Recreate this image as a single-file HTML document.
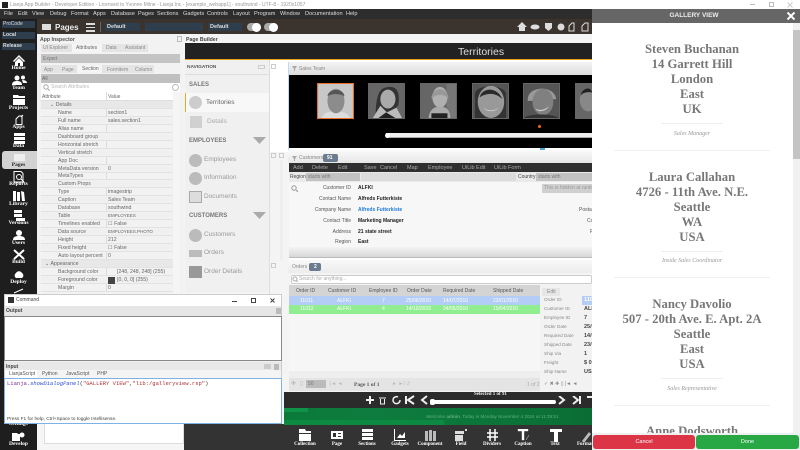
<!DOCTYPE html>
<html><head><meta charset="utf-8"><style>
html,body{margin:0;padding:0;width:800px;height:450px;overflow:hidden;background:#fff}
*{box-sizing:border-box}
body{font-family:"Liberation Sans",sans-serif;font-size:5px;color:#444;position:relative;filter:blur(.3px)}
.b{position:absolute}
.t{position:absolute;white-space:nowrap;line-height:8px}
.side{position:absolute;left:0;width:37px;text-align:center;color:#fff;font:bold 5.5px/7px "Liberation Serif",serif}
.row{position:absolute;left:41px;width:132px;height:8px;border-bottom:1px solid #e2e2e2;color:#666;font-size:5.2px;line-height:8px}
.row.a{background:#f0f0f0}
.row b{font-weight:normal;position:absolute;left:17px;white-space:nowrap}
.row i{font-style:normal;position:absolute;left:67px;white-space:nowrap}
.nav{position:absolute;left:204px;color:#777;font-size:6.5px;line-height:10px;white-space:nowrap}
.nh{position:absolute;left:189px;color:#777;font-weight:bold;font-size:6px;line-height:10px}
.ni{position:absolute;left:189px;width:13px;height:13px;border-radius:50%;background:#bbb}
.ph{position:absolute;top:83px;width:37px;height:36px;border:1px solid #666}
.m{position:absolute;top:9px;color:#ddd;font-size:5.6px;line-height:10px;white-space:nowrap}
.g{position:absolute;left:593px;width:198px;text-align:center;font:bold 12.7px/15px "Liberation Serif",serif;color:#777}
.s{position:absolute;left:593px;width:198px;text-align:center;font:italic 6px/8px "Liberation Serif",serif;color:#999}
.d1{position:absolute;left:661px;width:62px;height:1px;background:#eee}
.d2{position:absolute;left:614px;width:156px;height:1px;background:#f0f0f0}
.f{position:absolute;left:292px;width:59px;text-align:right;font-size:5px;line-height:8px;color:#555}
.v{position:absolute;left:358px;font-size:5px;font-weight:bold;line-height:8px;color:#222;white-space:nowrap}
.hc{position:absolute;top:287px;font-size:5px;line-height:8px;color:#555;white-space:nowrap}
.c{position:absolute;font-size:5px;line-height:8px;color:#fff;white-space:nowrap}
.e{position:absolute;left:544px;font-size:4.6px;line-height:8px;color:#888;white-space:nowrap}
.ev{position:absolute;left:584px;font-size:5.5px;font-weight:bold;line-height:8px;color:#444}
.tb{position:absolute;top:441px;color:#fff;font:bold 5px/7px "Liberation Serif",serif;text-align:center;width:40px}
.cb{position:absolute;top:164px;color:#aaa;font-size:5.5px;line-height:8px;white-space:nowrap}
</style></head><body>

<!-- title bar -->
<div class="b" style="left:0;top:0;width:592px;height:9px;background:#fff"></div>
<div class="b" style="left:2px;top:2px;width:6px;height:6px;background:#222"></div>
<div class="t" style="left:10px;top:1px;font-size:5px;color:#999">Lianja App Builder - Developer Edition - Licensed to Yvonne Milne - Lianja Inc - [example_webapp1] - southwind - UTF-8 - 1920x1057</div>

<!-- menu -->
<div class="b" style="left:0;top:9px;width:592px;height:10px;background:#2d2d2d"></div>
<span class="m" style="left:4px">File</span><span class="m" style="left:18px">Edit</span><span class="m" style="left:32px">View</span><span class="m" style="left:50px">Debug</span><span class="m" style="left:71px">Format</span><span class="m" style="left:93px">Apps</span><span class="m" style="left:111px">Database</span><span class="m" style="left:138px">Pages</span><span class="m" style="left:157px">Sections</span><span class="m" style="left:183px">Gadgets</span><span class="m" style="left:207px">Controls</span><span class="m" style="left:233px">Layout</span><span class="m" style="left:254px">Program</span><span class="m" style="left:280px">Window</span><span class="m" style="left:305px">Documentation</span><span class="m" style="left:346px">Help</span>

<!-- toolbar -->
<div class="b" style="left:37px;top:19px;width:555px;height:15px;background:#3a332e"></div>
<div class="b" style="left:0;top:19px;width:37px;height:431px;background:#1e1e1e"></div>
<div class="b" style="left:2px;top:21px;width:33px;height:7px;background:#2f3e4c"></div><span class="t" style="left:3px;top:20px;color:#ddd;font-size:5px">ProCode</span>
<div class="b" style="left:2px;top:32px;width:33px;height:7px;background:#2f3e4c"></div><span class="t" style="left:3px;top:31px;color:#ddd;font-size:5px;font-weight:bold">Local</span>
<div class="b" style="left:2px;top:43px;width:33px;height:7px;background:#2f3e4c"></div><span class="t" style="left:3px;top:42px;color:#ddd;font-size:5px;font-weight:bold">Release</span>
<div class="b" style="left:42px;top:24px;width:9px;height:6px;background:#ddd"></div>
<span class="t" style="left:55px;top:23px;color:#eee;font-size:8px;line-height:9px;font-weight:bold">Pages</span>
<div class="b" style="left:86px;top:23px;width:9px;height:1.5px;background:#ddd"></div><div class="b" style="left:86px;top:26.5px;width:9px;height:1.5px;background:#ddd"></div><div class="b" style="left:86px;top:30px;width:9px;height:1.5px;background:#ddd"></div>
<div class="b" style="left:100px;top:22px;width:1px;height:10px;background:#666"></div>
<div class="b" style="left:105px;top:23px;width:35px;height:8px;background:#2f3e4c"></div><span class="t" style="left:107px;top:23px;color:#ddd;font-weight:bold;font-size:5.5px">Default</span>
<div class="b" style="left:145px;top:23px;width:58px;height:8px;background:#2f3e4c"></div>
<div class="b" style="left:208px;top:23px;width:34px;height:8px;background:#2f3e4c"></div><span class="t" style="left:210px;top:23px;color:#ddd;font-weight:bold;font-size:5.5px">Default</span>
<div class="b" style="left:247px;top:23px;width:14px;height:8px;border-radius:4px;background:#aaa"></div><div class="b" style="left:252px;top:22.5px;width:9px;height:9px;border-radius:50%;background:#fff"></div>
<div class="b" style="left:264px;top:23px;width:14px;height:8px;border-radius:4px;background:#aaa"></div><div class="b" style="left:269px;top:22.5px;width:9px;height:9px;border-radius:50%;background:#fff"></div>
<svg class="b" style="left:516px;top:21px" width="76" height="12" fill="#ddd"><path d="M1 6 6 1l5 5H9v4H3V6z"/><ellipse cx="19" cy="6" rx="4.5" ry="2.5"/><path d="M29 2h7v5l-3.500 3-3.500-3z"/><circle cx="45" cy="6" r="3.500"/><path d="M53 5l3-3h2v8h-5z" fill="none" stroke="#ddd"/><path d="M66 5l3-3h3v8h-6z" fill="none" stroke="#ddd"/></svg>

<!-- sidebar -->
<svg class="b" style="left:13px;top:55px" width="12" height="11" fill="#fff"><path d="M0 6 6 0l6 6-1 1-5-5-5 5z"/><path d="M2 7 6 3l4 4v4H7V8H5v3H2z"/></svg>
<div class="side" style="top:65px">Home</div>
<svg class="b" style="left:12px;top:75px" width="15" height="10" fill="#fff"><circle cx="5" cy="3" r="2.500"/><circle cx="11" cy="2.500" r="2"/><path d="M0 10c0-3 2-4 5-4s5 1 5 4z"/><path d="M10 5c3 0 5 1 5 3h-4z"/></svg>
<div class="side" style="top:85px">Team</div>
<svg class="b" style="left:13px;top:95px" width="12" height="10" fill="#fff"><path d="M0 0h5l1 1h6v2H0z"/><path d="M0 4h12v6H0z"/></svg>
<div class="side" style="top:105px">Projects</div>
<svg class="b" style="left:15px;top:114px" width="9" height="11" fill="none" stroke="#fff"><path d="M1 5l3-3h3v8.500H1z"/><path d="M6 3l2-2"/></svg>
<div class="side" style="top:124px">Apps</div>
<svg class="b" style="left:14px;top:133px" width="11" height="11" fill="#fff"><path d="M0 0h11v3H0zM0 4h11v3H0zM0 8h11v3H0z"/></svg>
<div class="side" style="top:143px">Data</div>
<div class="b" style="left:2px;top:151px;width:35px;height:18px;background:#d2d2d2;border-radius:3px 0 0 3px"></div>
<div class="b" style="left:14px;top:154px;width:11px;height:7px;background:#eee"></div>
<div class="side" style="top:162px;color:#222">Pages</div>
<svg class="b" style="left:13px;top:171px" width="12" height="12" fill="none" stroke="#fff"><path d="M1 .5h7l2 2V11H1z"/><circle cx="6" cy="6" r="2.500"/><path d="M8 8l3 3"/></svg>
<div class="side" style="top:181px">Reports</div>
<svg class="b" style="left:13px;top:191px" width="12" height="10" fill="#fff"><path d="M0 0h3v10H0zM4 1h3v9H4zM8 0l3 1 1 9h-3z"/></svg>
<div class="side" style="top:201px">Library</div>
<svg class="b" style="left:13px;top:210px" width="12" height="11" fill="#fff"><path d="M1 0h8v3H1zM1 4h8v3H1zM3 8h9v3H3z"/></svg>
<div class="side" style="top:220px">Versions</div>
<svg class="b" style="left:13px;top:230px" width="12" height="10" fill="#fff"><circle cx="6" cy="3" r="3"/><path d="M0 10c0-3 2-4 6-4s6 1 6 4z"/></svg>
<div class="side" style="top:240px">Users</div>
<svg class="b" style="left:13px;top:249px" width="12" height="11" stroke="#fff" stroke-width="2" fill="none"><path d="M1 1l10 9M11 1 1 10"/></svg>
<div class="side" style="top:259px">Build</div>
<svg class="b" style="left:13px;top:269px" width="12" height="9" fill="#fff"><path d="M3 9a3 3 0 0 1 0-5 3.500 3.500 0 0 1 6 0 3 3 0 0 1 0 5z"/></svg>
<div class="side" style="top:279px">Deploy</div>
<svg class="b" style="left:13px;top:288px" width="12" height="6" stroke="#fff" fill="none"><path d="M1 5l9-4"/></svg>
<div class="side" style="top:421px">Settings</div>
<svg class="b" style="left:12px;top:432px" width="13" height="9" fill="#fff"><path d="M0 1h5l1 1h2v7H0z"/><circle cx="10" cy="3" r="2.500"/></svg>
<div class="side" style="top:441px">Develop</div>

<!-- App inspector -->
<div class="b" style="left:37px;top:34px;width:146px;height:416px;background:#f2f2f2"></div>
<span class="t" style="left:40px;top:36px;font-weight:bold;font-size:5.2px;color:#555">App Inspector</span>
<div class="b" style="left:177px;top:36px;width:5px;height:6px;border:1px solid #bbb"></div>
<div class="b" style="left:41px;top:44px;width:107px;height:8px;background:#e4e4e4"></div>
<div class="b" style="left:72px;top:44px;width:30px;height:8px;background:#f5f5f5"></div>
<span class="t" style="left:43px;top:44px;color:#888">UI Explorer</span><span class="t" style="left:76px;top:44px;color:#666">Attributes</span><span class="t" style="left:106px;top:44px;color:#888">Data</span><span class="t" style="left:125px;top:44px;color:#888">Assistant</span>
<div class="b" style="left:41px;top:54px;width:139px;height:9px;background:#c4c4c4"></div><span class="t" style="left:43px;top:55px;color:#777">Expert</span>
<div class="b" style="left:41px;top:65px;width:113px;height:8px;background:#e4e4e4"></div>
<div class="b" style="left:77px;top:65px;width:25px;height:8px;background:#f5f5f5"></div>
<span class="t" style="left:44px;top:66px;color:#888">App</span><span class="t" style="left:62px;top:66px;color:#888">Page</span><span class="t" style="left:82px;top:65px;color:#666">Section</span><span class="t" style="left:107px;top:66px;color:#888">Formitem</span><span class="t" style="left:135px;top:66px;color:#888">Column</span>
<div class="b" style="left:41px;top:74px;width:139px;height:9px;background:#c0c0c0"></div><span class="t" style="left:42px;top:75px;color:#666">All</span>
<div class="b" style="left:41px;top:83px;width:139px;height:9px;background:#fff"></div>
<svg class="b" style="left:43px;top:84px" width="7" height="7" fill="none" stroke="#aaa"><circle cx="3" cy="3" r="2.200"/><path d="M5 5l2 2"/></svg>
<span class="t" style="left:51px;top:83px;color:#bbb">Search Attributes</span>
<div class="b" style="left:172px;top:84px;width:7px;height:7px;border-radius:50%;border:1px solid #bbb"></div>
<div class="b" style="left:41px;top:92px;width:132px;height:9px;background:#fff;border-bottom:1px solid #ddd"></div>
<span class="t" style="left:42px;top:93px;color:#666">Attribute</span><span class="t" style="left:108px;top:93px;color:#666">Value</span>
<div class="b" style="left:106px;top:92px;width:1px;height:200px;background:#dcdcdc"></div>
<div class="b" style="left:173px;top:92px;width:7px;height:205px;background:#f5f5f5"></div>
<div class="row" style="top:101px;background:#e8e8e8"><b style="left:9px">⌄ Details</b></div>
<div class="row" style="top:109px"><b>Name</b><i>section1</i></div>
<div class="row a" style="top:117px"><b>Full name</b><i>sales.section1</i></div>
<div class="row" style="top:125px"><b>Alias name</b></div>
<div class="row a" style="top:133px"><b>Dashboard group</b></div>
<div class="row" style="top:141px"><b>Horizontal stretch</b></div>
<div class="row a" style="top:149px"><b>Vertical stretch</b></div>
<div class="row" style="top:157px"><b>App Doc</b></div>
<div class="row a" style="top:165px"><b>MetaData version</b><i>0</i></div>
<div class="row" style="top:172px"><b>MetaTypes</b></div>
<div class="row a" style="top:180px"><b>Custom Props</b></div>
<div class="row" style="top:188px"><b>Type</b><i>imagestrip</i></div>
<div class="row a" style="top:196px"><b>Caption</b><i>Sales Team</i></div>
<div class="row" style="top:204px"><b>Database</b><i>southwind</i></div>
<div class="row a" style="top:212px"><b>Table</b><i style="font-size:4.500px">EMPLOYEES</i></div>
<div class="row" style="top:220px"><b>Timelines enabled</b><i>☐ False</i></div>
<div class="row a" style="top:228px"><b>Data source</b><i style="font-size:4.500px">EMPLOYEES.PHOTO</i></div>
<div class="row" style="top:236px"><b>Height</b><i>212</i></div>
<div class="row a" style="top:244px"><b>Fixed height</b><i>☐ False</i></div>
<div class="row" style="top:252px"><b>Auto layout percent</b><i>0</i></div>
<div class="row" style="top:260px;background:#e8e8e8"><b style="left:4px">⌄ Appearance</b></div>
<div class="row" style="top:268px"><b>Background color</b><i style="left:76px">[248, 248, 248] (255)</i></div>
<div class="row a" style="top:276px"><b>Foreground color</b><i style="left:76px">[0, 0, 0] (255)</i></div>
<div class="b" style="left:108px;top:277px;width:7px;height:7px;background:#444"></div>
<div class="row" style="top:284px"><b>Margin</b><i>0</i></div>

<!-- page builder -->
<div class="b" style="left:183px;top:34px;width:409px;height:416px;background:#f4f4f4"></div>
<span class="t" style="left:186px;top:36px;font-weight:bold;font-size:5.2px;color:#444">Page Builder</span>
<div class="b" style="left:185px;top:43px;width:407px;height:16px;background:#222"></div>
<span class="t" style="left:458px;top:46px;color:#ddd;font-size:10.500px;line-height:12px">Territories</span>
<div class="b" style="left:185px;top:59px;width:407px;height:1px;background:#e8a317"></div>
<div class="b" style="left:185px;top:60px;width:84px;height:232px;background:#f0f0f0"></div>
<div class="b" style="left:269px;top:60px;width:323px;height:2px;background:#fff"></div>
<div class="b" style="left:269px;top:62px;width:323px;height:90px;background:#fff"></div>
<div class="b" style="left:288px;top:61.500px;width:304px;height:1px;background:#b8dcf5"></div>
<div class="b" style="left:288px;top:62px;width:1px;height:88px;background:#b8dcf5"></div>
<span class="t" style="left:187px;top:64px;font-weight:bold;font-size:4.800px;color:#555">NAVIGATION</span>
<div class="b" style="left:258px;top:65px;width:7px;height:4px;border:1px solid #ccc"></div>
<div class="b" style="left:185px;top:74px;width:84px;height:1px;background:#ddd"></div>
<div class="nh" style="top:80px">SALES</div>
<div class="b" style="left:185px;top:93px;width:84px;height:19px;background:#f8f8f8;border-left:1px solid #f0a91e"></div>
<div class="ni" style="top:96px;background:#ccc"></div><div class="nav" style="left:206px;top:98px;color:#666">Territories</div>
<div class="b" style="left:190px;top:116px;width:12px;height:12px;background:#d0d0d0"></div><div class="nav" style="left:207px;top:117px;color:#aaa">Details</div>
<div class="nh" style="top:136px">EMPLOYEES</div>
<svg class="b" style="left:253px;top:137px" width="13" height="7" fill="#aaa"><path d="M0 0h13l-6.500 7z"/></svg>
<div class="ni" style="top:154px"></div><div class="nav" style="top:155px;color:#999">Employees</div>
<div class="ni" style="top:172px"></div><div class="nav" style="top:173px;color:#999">Information</div>
<div class="b" style="left:189px;top:191px;width:13px;height:12px;background:#ddd;border:1px solid #aaa"></div><div class="nav" style="top:192px;color:#999">Documents</div>
<div class="nh" style="top:211px">CUSTOMERS</div>
<svg class="b" style="left:253px;top:212px" width="13" height="7" fill="#aaa"><path d="M0 0h13l-6.500 7z"/></svg>
<div class="ni" style="top:229px"></div><div class="nav" style="top:230px;color:#999">Customers</div>
<div class="b" style="left:189px;top:250px;width:13px;height:7px;background:#bbb"></div><div class="nav" style="top:248px;color:#999">Orders</div>
<div class="b" style="left:189px;top:266px;width:13px;height:12px;background:#999"></div><div class="nav" style="top:267px;color:#999">Order Details</div>
<div class="b" style="left:269px;top:60px;width:1px;height:235px;background:#ddd"></div>
<div class="b" style="left:271px;top:64px;width:5px;height:5px;border:1px solid #ccc"></div>
<div class="b" style="left:271px;top:153px;width:5px;height:5px;border:1px solid #ccc"></div>
<div class="b" style="left:279px;top:153px;width:5px;height:5px;border:1px solid #ccc"></div>
<div class="b" style="left:280px;top:160px;width:3px;height:100px;background:#eee"></div>
<div class="b" style="left:271px;top:263px;width:5px;height:5px;border:1px solid #ccc"></div>

<!-- Sales team -->
<div class="b" style="left:289px;top:62px;width:303px;height:13px;background:linear-gradient(#f4f4f4,#dcdcdc)"></div>
<span class="t" style="left:299px;top:65px;color:#888;font-size:5px">Sales Team</span>
<svg class="b" style="left:292px;top:66px" width="5" height="5" fill="#aaa"><path d="M0 0h5L3 3v2H2V3z"/></svg>
<div class="b" style="left:289px;top:75px;width:303px;height:73px;background:#000"></div>
<div class="b" style="left:386px;top:133px;width:206px;height:5px;background:#eee;border-bottom:1px solid #aaa"></div>
<div class="b" style="left:540px;top:148px;width:5px;height:2px;background:#4aa8d8"></div>
<div class="b" style="left:385px;top:133px;width:5px;height:5px;border-radius:50%;background:#fff"></div>
<div class="b" style="left:538px;top:125px;width:3px;height:3px;border-radius:50%;background:#f26522"></div>

<svg class="ph" style="left:317px;border-color:#e8702a" viewBox="0 0 37 36"><rect width="37" height="36" fill="#c8c8c8"/><path d="M4 36c2-6 8-7 15-7s13 2 15 7z" fill="#ddd"/><ellipse cx="19" cy="18" rx="9" ry="13" fill="#8c8c8c"/><path d="M10 13c1-9 17-9 18 0-4-3-14-3-18 0z" fill="#555"/></svg>
<svg class="ph" style="left:368px" viewBox="0 0 37 36"><rect width="37" height="36" fill="#666"/><path d="M7 36c0-25 4-33 15-33s10 12 9 20c-4 0-2 13 6 13z" fill="#333"/><ellipse cx="20" cy="16" rx="8" ry="10" fill="#aaa"/><path d="M4 36l8-13 7 7 10-5 6 11z" fill="#bbb"/><path d="M10 36l8-6 10 6z" fill="#222"/></svg>
<svg class="ph" style="left:420px" viewBox="0 0 37 36"><rect width="37" height="36" fill="#666"/><rect x="27" width="10" height="36" fill="#777"/><ellipse cx="20" cy="14" rx="8" ry="11" fill="#b0b0b0"/><path d="M11 16c0-14 18-14 18 0-3-6-15-6-18 0z" fill="#999"/><path d="M8 36c1-9 6-12 12-12s11 3 11 12z" fill="#aaa"/><rect x="11" y="31" width="17" height="5" fill="#222"/></svg>
<svg class="ph" style="left:472px" viewBox="0 0 37 36"><rect width="37" height="36" fill="#555"/><path d="M2 36V10C4 0 32 0 35 10v26z" fill="#333"/><ellipse cx="19" cy="19" rx="14" ry="17" fill="#999"/><path d="M7 14C10 3 26 3 31 16 24 9 15 9 7 14z" fill="#2a2a2a"/><path d="M11 25c4 4 12 4 16 0-3 5-13 5-16 0z" fill="#ddd"/></svg>
<svg class="ph" style="left:523px" viewBox="0 0 37 36"><rect width="37" height="36" fill="#555"/><path d="M4 18C2 2 32 0 34 16z" fill="#999"/><ellipse cx="20" cy="19" rx="11" ry="14" fill="#808080"/><path d="M12 26c4 3 12 1 14-3-1 6-12 8-14 3z" fill="#ccc"/><path d="M0 36c4-5 30-5 37 0z" fill="#333"/></svg>
<svg class="ph" style="left:575px;width:17px;border-right:0" viewBox="0 0 17 36" preserveAspectRatio="none"><rect width="17" height="36" fill="#666"/><ellipse cx="13" cy="17" rx="9" ry="12" fill="#888"/><path d="M5 12C7 3 17 3 17 9 12 8 8 9 5 12z" fill="#222"/></svg>

<!-- Customers -->
<div class="b" style="left:288px;top:150px;width:304px;height:13px;background:linear-gradient(#fafafa,#e6e6e6)"></div>
<svg class="b" style="left:292px;top:156px" width="5" height="5" fill="#aaa"><path d="M0 0h5L3 3v2H2V3z"/></svg>
<span class="t" style="left:299px;top:154px;color:#888">Customers</span>
<div class="b" style="left:323px;top:154px;width:15px;height:8px;background:#6b7c8f;border-radius:2px"></div><span class="t" style="left:327px;top:154px;color:#fff;font-weight:bold;font-size:5px">91</span>
<div class="b" style="left:289px;top:163px;width:303px;height:9px;background:#2f2f2f"></div>
<span class="cb" style="left:293px">Add</span><span class="cb" style="left:312px">Delete</span><span class="cb" style="left:338px">Edit</span><span class="cb" style="left:364px">Save</span><span class="cb" style="left:380px">Cancel</span><span class="cb" style="left:407px">Map</span><span class="cb" style="left:428px">Employee</span><span class="cb" style="left:462px">UiLib Edit</span><span class="cb" style="left:494px">UiLib Form</span>
<div class="b" style="left:289px;top:172px;width:303px;height:10px;background:#eaeaea"></div>
<span class="t" style="left:290px;top:173px;font-size:5px;color:#444">Region</span>
<div class="b" style="left:306px;top:173px;width:54px;height:8px;background:#c2c2c2"></div><span class="t" style="left:308px;top:173px;font-size:5px;color:#777">starts with</span>
<div class="b" style="left:361px;top:173px;width:155px;height:8px;background:#dcdcdc"></div>
<span class="t" style="left:518px;top:173px;font-size:5px;color:#444">Country</span>
<div class="b" style="left:536px;top:173px;width:56px;height:8px;background:#c2c2c2"></div><span class="t" style="left:538px;top:173px;font-size:5px;color:#777">starts with</span>
<div class="b" style="left:289px;top:182px;width:303px;height:65px;background:#f7f7f7"></div>
<div class="b" style="left:289px;top:247px;width:303px;height:10px;background:linear-gradient(#f4f4f4,#d8d8d8)"></div>
<div class="b" style="left:289px;top:257px;width:303px;height:1px;background:#bbb"></div>
<div class="b" style="left:289px;top:258px;width:303px;height:6px;background:#fff"></div>
<div class="b" style="left:542px;top:184px;width:50px;height:9px;background:#d0d0d0"></div><span class="t" style="left:544px;top:184px;font-size:5px;color:#999">This is hidden at runtime</span>
<svg class="b" style="left:291px;top:185px" width="7" height="7" fill="none" stroke="#999"><circle cx="3" cy="3" r="2.200"/><path d="M5 5l2 2"/></svg>
<div class="f" style="top:184px">Customer ID</div><div class="v" style="top:184px">ALFKI</div>
<div class="f" style="top:195px">Contact Name</div><div class="v" style="top:195px">Alfreds Futterkiste</div>
<div class="f" style="top:206px">Company Name</div><div class="v" style="top:206px;color:#1e7ad8">Alfreds Futterkiste</div>
<div class="f" style="top:217px">Contact Title</div><div class="v" style="top:217px">Marketing Manager</div>
<div class="f" style="top:228px">Address</div><div class="v" style="top:228px">21 state street</div>
<div class="f" style="top:238px">Region</div><div class="v" style="top:238px">East</div>
<span class="t" style="left:579px;top:206px;font-size:5px;color:#555">Postal</span><span class="t" style="left:587px;top:217px;font-size:5px;color:#555">Co</span><span class="t" style="left:590px;top:228px;font-size:5px;color:#555">P</span>

<!-- Orders -->
<div class="b" style="left:288px;top:260px;width:304px;height:13px;background:linear-gradient(#f8f8f8,#ececec)"></div>
<span class="t" style="left:292px;top:263px;color:#888;font-size:5px">Orders</span>
<div class="b" style="left:309px;top:263px;width:12px;height:8px;background:#6b7c8f;border-radius:2px"></div><span class="t" style="left:314px;top:263px;color:#fff;font-weight:bold;font-size:5px">2</span>
<div class="b" style="left:291px;top:275px;width:301px;height:9px;background:#fff;border:1px solid #ccc;border-radius:2px"></div>
<svg class="b" style="left:292px;top:276px" width="6" height="6" fill="none" stroke="#aaa"><circle cx="3" cy="3" r="2"/><path d="M4.500 4.500 6 6"/></svg>
<span class="t" style="left:299px;top:275px;color:#aaa;font-size:5px">Search for anything...</span>
<div class="b" style="left:289px;top:285px;width:251px;height:11px;background:#d4d4d4"></div>
<span class="hc" style="left:296px">Order ID</span><span class="hc" style="left:328px">Customer ID</span><span class="hc" style="left:369px">Employee ID</span><span class="hc" style="left:407px">Order Date</span><span class="hc" style="left:443px">Required Date</span><span class="hc" style="left:493px">Shipped Date</span>
<div class="b" style="left:289px;top:296px;width:253px;height:9px;background:#b3cdf6"></div>
<div class="b" style="left:289px;top:305px;width:253px;height:9px;background:#90ee90"></div>
<span class="c" style="left:300px;top:297px">11011</span><span class="c" style="left:337px;top:297px">ALFKI</span><span class="c" style="left:382px;top:297px">7</span><span class="c" style="left:406px;top:297px">25/06/2010</span><span class="c" style="left:443px;top:297px">14/07/2010</span><span class="c" style="left:493px;top:297px">23/01/2010</span>
<span class="c" style="left:300px;top:305px">11012</span><span class="c" style="left:337px;top:305px">ALFKI</span><span class="c" style="left:382px;top:305px">4</span><span class="c" style="left:406px;top:305px">14/10/2015</span><span class="c" style="left:443px;top:305px">24/05/2010</span><span class="c" style="left:493px;top:305px">15/04/2010</span>
<div class="b" style="left:289px;top:314px;width:253px;height:62px;background:#f6f6f6"></div>
<div class="b" style="left:289px;top:371px;width:251px;height:7px;background:#eee"></div>
<div class="b" style="left:289px;top:378px;width:251px;height:13px;background:#e4e4e4"></div>
<div class="b" style="left:306px;top:380px;width:20px;height:8px;background:#bbb"></div><span class="t" style="left:308px;top:380px;font-size:5px;color:#777">50</span>
<span class="t" style="left:291px;top:380px;color:#bbb;font-size:6px">✚</span><span class="t" style="left:300px;top:380px;color:#bbb;font-size:6px">▯</span>
<span class="t" style="left:330px;top:380px;color:#bbb;font-size:5px">|◄ ◄</span>
<span class="t" style="left:354px;top:381px;font:bold 5.500px/8px 'Liberation Serif',serif;color:#555">Page 1 of 1</span>
<span class="t" style="left:392px;top:380px;color:#bbb;font-size:5px">► ►| ↺</span>
<span class="t" style="left:527px;top:381px;color:#aaa;font-size:5px">1 of 22</span>
<div class="b" style="left:540px;top:285px;width:52px;height:106px;background:#f2f2f2"></div>
<div class="b" style="left:542px;top:288px;width:18px;height:8px;background:#e6e6e6"></div><span class="t" style="left:547px;top:288px;font-size:5px;color:#888">Edit</span>
<div class="b" style="left:582px;top:296px;width:10px;height:9px;background:#b3cdf6"></div>
<span class="e" style="top:296px">Order ID</span><span class="ev" style="top:296px;color:#fff">110</span>
<span class="e" style="top:305px">Customer ID</span><span class="ev" style="top:305px">ALF</span>
<span class="e" style="top:314px">Employee ID</span><span class="ev" style="top:314px">7</span>
<span class="e" style="top:323px">Order Date</span><span class="ev" style="top:323px">25/0</span>
<span class="e" style="top:332px">Required Date</span><span class="ev" style="top:332px">14/0</span>
<span class="e" style="top:341px">Shipped Date</span><span class="ev" style="top:341px">23/0</span>
<span class="e" style="top:350px">Ship Via</span><span class="ev" style="top:350px">1</span>
<span class="e" style="top:359px">Freight</span><span class="ev" style="top:359px">$ 0</span>
<span class="e" style="top:368px">Ship Name</span><span class="ev" style="top:368px">USA</span>
<span class="t" style="left:544px;top:380px;font-size:5px;color:#888">✓ ✖ ✚ ▯ |◄ ◄</span>

<!-- bottom bars -->
<div class="b" style="left:284px;top:392px;width:308px;height:16px;background:#2b2b2b"></div>
<svg class="b" style="left:365px;top:394px" width="66" height="12" fill="none" stroke="#eee" stroke-width="2"><path d="M1 6h8M5 2v8"/><path d="M14 4h7M15.500 5v5h4V5" stroke-width="1"/><path d="M33 3a3.500 3.500 0 1 0 2 3" stroke-width="1.500"/><path d="M41 2v8M49 2l-6 4 6 4"/><path d="M62 2l-5 4 5 4"/></svg>
<div class="b" style="left:432px;top:400px;width:124px;height:4px;border-radius:2px;background:#fff"></div>
<div class="b" style="left:430px;top:399px;width:5px;height:6px;border-radius:2px;background:#fff"></div>
<span class="t" style="left:474px;top:391px;color:#eee;font:bold 5px/7px 'Liberation Serif',serif">Selected 1 of 91</span>
<svg class="b" style="left:556px;top:396px" width="36" height="12" fill="none" stroke="#eee" stroke-width="2"><path d="M3 0l5 4-5 4M17 0l5 4-5 4M24 0v8M31 1h5"/></svg>
<div class="b" style="left:284px;top:408px;width:308px;height:17px;background:linear-gradient(90deg,#0a7a3a,#0e7c3e 30%,#0a6e34)"></div>
<div class="b" style="left:284px;top:408px;width:24px;height:4px;background:#0f9348"></div>
<div class="b" style="left:284px;top:420px;width:160px;height:5px;background:#0c8a42"></div>
<span class="t" style="left:426px;top:413px;color:#5fae80;font-size:4.600px">Welcome <b>admin</b>. Today is Monday November 4 2024 at 11:39:51</span>
<div class="b" style="left:284px;top:425px;width:308px;height:25px;background:#333"></div>
<div class="b" style="left:37px;top:424px;width:147px;height:26px;background:#f6f6f6"></div>
<div class="b" style="left:44px;top:424px;width:140px;height:20px;border:1px solid #ddd;border-top:0;background:#fff"></div>
<div class="b" style="left:184px;top:424px;width:100px;height:26px;background:#333"></div>
<svg class="b" style="left:284px;top:429px" width="308" height="13" fill="#fff">
<path d="M15 0h6l1 2h5v2H15zM15 5h12v7H15z"/>
<path d="M47 2h12v8H47z"/><path d="M49 4h3v4h-3zM54 4h3v1h-3zM54 7h3v1h-3z" fill="#333"/>
<path d="M78 0h11v3H78zM78 4h11v3H78zM78 8h11v3H78z"/>
<path d="M110 0h1v11h11v1h-12zM113 9l3-4 2 2 3-4v6z"/>
<path d="M141 2h3v10h-3zM145 1h3v11h-3zM149 2h3v10h-3z" fill="#bbb"/>
<path d="M171 2h9v3h-9zM171 6h8v6h-8zM181 0h2v2h-2z" fill="#ddd"/>
<path d="M206 0v12M211 0v12M203 4h11M203 8h11" stroke="#fff" stroke-width="1.500" fill="none"/>
<path d="M234 0h10v2h-4v9h-2V2h-4zM242 11l3-5" stroke="#fff" stroke-width=".4"/>
<path d="M266 0h12v3h-4v10h-4V3h-4z"/>
<path d="M298 12l7-9 2 2-7 9z" fill="#bbb"/>
</svg>
<div class="tb" style="left:285px">Collection</div><div class="tb" style="left:317px">Page</div><div class="tb" style="left:347px">Sections</div><div class="tb" style="left:380px">Gadgets</div><div class="tb" style="left:410px">Component</div><div class="tb" style="left:441px">Field</div><div class="tb" style="left:472px">Dividers</div><div class="tb" style="left:503px">Caption</div><div class="tb" style="left:535px">Text</div><div class="tb" style="left:565px">Format</div>

<!-- Command window -->
<div class="b" style="left:4px;top:294px;width:278px;height:130px;background:#f0f0f0;border:1px solid #ccc"></div>
<div class="b" style="left:5px;top:295px;width:276px;height:11px;background:#fff"></div>
<div class="b" style="left:8px;top:297px;width:6px;height:6px;background:#333"></div>
<span class="t" style="left:16px;top:296px;font-size:5px;color:#444">Command</span>
<div class="b" style="left:232px;top:301px;width:5px;height:1px;background:#444"></div>
<div class="b" style="left:251px;top:298px;width:5px;height:5px;border:1px solid #444"></div>
<svg class="b" style="left:270px;top:298px" width="6" height="6" stroke="#444" fill="none"><path d="M.5.500l4 4M4.500.500l-4 4"/></svg>
<div class="b" style="left:5px;top:306px;width:276px;height:10px;background:#e6e6e6"></div>
<span class="t" style="left:6px;top:307px;font-weight:bold;font-size:5px;color:#444">Output</span>
<div class="b" style="left:276px;top:308px;width:5px;height:6px;background:#bbb"></div>
<div class="b" style="left:4px;top:316px;width:278px;height:45px;background:#fff;border:1px solid #888"></div>
<div class="b" style="left:5px;top:362px;width:276px;height:9px;background:#e8e8e8"></div>
<span class="t" style="left:6px;top:363px;font-weight:bold;font-size:5px;color:#444">Input</span>
<div class="b" style="left:264px;top:364px;width:7px;height:5px;background:#ccc"></div><div class="b" style="left:274px;top:364px;width:5px;height:6px;background:#bbb"></div>
<div class="b" style="left:5px;top:370px;width:276px;height:8px;background:#f4f4f4"></div>
<div class="b" style="left:5px;top:370px;width:32px;height:8px;background:#fff"></div>
<span class="t" style="left:9px;top:370px;font-size:5px;color:#555">LianjaScript</span><span class="t" style="left:42px;top:370px;font-size:5px;color:#555">Python</span><span class="t" style="left:66px;top:370px;font-size:5px;color:#555">JavaScript</span><span class="t" style="left:97px;top:370px;font-size:5px;color:#555">PHP</span>
<div class="b" style="left:4px;top:378px;width:278px;height:46px;background:#fff;border:1px solid #7fb2e0"></div>
<span class="t" style="left:7px;top:380px;font:5.500px/8px 'Liberation Mono',monospace;color:#333"><span style="color:#7a2b96">Lianja</span>.<span style="color:#2b4fd8;font-style:italic">showDialogPanel</span>(<span style="color:#b03030">"GALLERY VIEW"</span>,<span style="color:#b03030">"lib:/galleryview.rsp"</span>)</span>
<span class="t" style="left:7px;top:416px;font-size:4.800px;color:#444">Press F1 for help, Ctrl+Space to toggle Intellisense.</span>

<!-- Gallery dialog -->
<div class="b" style="left:592px;top:0;width:208px;height:450px;background:#fff"></div>
<div class="b" style="left:750px;top:4px;width:5px;height:1px;background:#bbb"></div>
<div class="b" style="left:769px;top:2px;width:5px;height:5px;border:1px solid #bbb"></div>
<svg class="b" style="left:787px;top:2px" width="6" height="6" stroke="#ccc" fill="none"><path d="M.5.500l5 5M5.500.500l-5 5"/></svg>
<div class="b" style="left:592px;top:9px;width:208px;height:14px;background:#666"></div>
<span class="t" style="left:591px;width:206px;text-align:center;top:12px;color:#eee;font-weight:bold;font-size:6.500px">GALLERY VIEW</span>
<svg class="b" style="left:787px;top:12px" width="8" height="8" stroke="#fff" stroke-width="2" fill="none"><path d="M.5.500l7 7M7.500.500l-7 7"/></svg>
<div class="b" style="left:793px;top:23px;width:7px;height:410px;background:#f1f1f1"></div>
<div class="b" style="left:793px;top:30px;width:7px;height:129px;background:#c4c4c4"></div>

<div class="g" style="top:42px">Steven Buchanan</div><div class="g" style="top:57px">14 Garrett Hill</div><div class="g" style="top:72px">London</div><div class="g" style="top:87px">East</div><div class="g" style="top:102px">UK</div>
<div class="d1" style="top:123px"></div><div class="s" style="top:130px">Sales Manager</div><div class="d2" style="top:150px"></div>
<div class="g" style="top:170px">Laura Callahan</div><div class="g" style="top:185px">4726 - 11th Ave. N.E.</div><div class="g" style="top:200px">Seattle</div><div class="g" style="top:215px">WA</div><div class="g" style="top:230px">USA</div>
<div class="d1" style="top:251px"></div><div class="s" style="top:257px">Inside Sales Coordinator</div><div class="d2" style="top:277px"></div>
<div class="g" style="top:297px">Nancy Davolio</div><div class="g" style="top:312px">507 - 20th Ave. E. Apt. 2A</div><div class="g" style="top:327px">Seattle</div><div class="g" style="top:342px">East</div><div class="g" style="top:357px">USA</div>
<div class="d1" style="top:378px"></div><div class="s" style="top:385px">Sales Representative</div><div class="d2" style="top:405px"></div>
<div class="g" style="top:424px">Anne Dodsworth</div>

<div class="b" style="left:592px;top:433px;width:208px;height:17px;background:#efefef"></div>
<div class="b" style="left:593px;top:435px;width:102px;height:14px;background:#dc3545;border-radius:3px"></div>
<div class="b" style="left:696px;top:435px;width:103px;height:14px;background:#28a745;border-radius:3px"></div>
<span class="t" style="left:593px;width:102px;text-align:center;top:438px;color:#fff;font-size:5.500px">Cancel</span>
<span class="t" style="left:696px;width:103px;text-align:center;top:438px;color:#fff;font-size:5.500px">Done</span>
</body></html>
